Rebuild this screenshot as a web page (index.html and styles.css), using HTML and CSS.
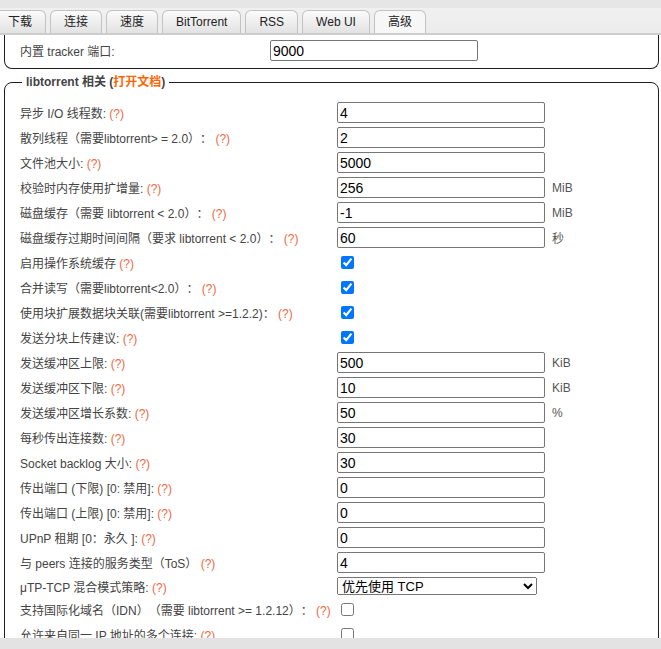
FILE: index.html
```html
<!DOCTYPE html>
<html lang="zh-CN">
<head>
    <meta charset="UTF-8">
    <title>选项 - 高级</title>
    <link rel="stylesheet" href="styles.css">
</head>
<body>
    <div class="tabbar">
        <ul class="tabs">
            <li>下载</li>
            <li>连接</li>
            <li>速度</li>
            <li>BitTorrent</li>
            <li>RSS</li>
            <li>Web UI</li>
            <li class="active">高级</li>
        </ul>
    </div>

    <div class="content">
        <!-- previous section, scrolled mostly out of view -->
        <div class="section cut">
            <table class="opts tracker">
                <colgroup><col class="c-lbl"><col class="c-val"><col></colgroup>
                <tr>
                    <td>内置 tracker 端口:</td>
                    <td><input type="text" value="9000"></td>
                    <td></td>
                </tr>
            </table>
        </div>

        <fieldset class="section">
            <legend>libtorrent 相关 (<a href="#">打开文档</a>)</legend>
            <table class="opts">
                <colgroup><col class="c-lbl"><col class="c-val"><col></colgroup>
                <tr>
                    <td>异步 I/O 线程数: <a class="help" href="#">(?)</a></td>
                    <td><input type="text" value="4"></td>
                    <td class="unit"></td>
                </tr>
                <tr>
                    <td>散列线程（需要libtorrent&gt; = 2.0）： <a class="help" href="#">(?)</a></td>
                    <td><input type="text" value="2"></td>
                    <td class="unit"></td>
                </tr>
                <tr>
                    <td>文件池大小: <a class="help" href="#">(?)</a></td>
                    <td><input type="text" value="5000"></td>
                    <td class="unit"></td>
                </tr>
                <tr>
                    <td>校验时内存使用扩增量: <a class="help" href="#">(?)</a></td>
                    <td><input type="text" value="256"></td>
                    <td class="unit">MiB</td>
                </tr>
                <tr>
                    <td>磁盘缓存（需要 libtorrent &lt; 2.0）： <a class="help" href="#">(?)</a></td>
                    <td><input type="text" value="-1"></td>
                    <td class="unit">MiB</td>
                </tr>
                <tr>
                    <td>磁盘缓存过期时间间隔（要求 libtorrent &lt; 2.0）： <a class="help" href="#">(?)</a></td>
                    <td><input type="text" value="60"></td>
                    <td class="unit">秒</td>
                </tr>
                <tr>
                    <td>启用操作系统缓存 <a class="help" href="#">(?)</a></td>
                    <td><input type="checkbox" checked></td>
                    <td class="unit"></td>
                </tr>
                <tr>
                    <td>合并读写（需要libtorrent&lt;2.0）： <a class="help" href="#">(?)</a></td>
                    <td><input type="checkbox" checked></td>
                    <td class="unit"></td>
                </tr>
                <tr>
                    <td>使用块扩展数据块关联(需要libtorrent &gt;=1.2.2)： <a class="help" href="#">(?)</a></td>
                    <td><input type="checkbox" checked></td>
                    <td class="unit"></td>
                </tr>
                <tr>
                    <td>发送分块上传建议: <a class="help" href="#">(?)</a></td>
                    <td><input type="checkbox" checked></td>
                    <td class="unit"></td>
                </tr>
                <tr>
                    <td>发送缓冲区上限: <a class="help" href="#">(?)</a></td>
                    <td><input type="text" value="500"></td>
                    <td class="unit">KiB</td>
                </tr>
                <tr>
                    <td>发送缓冲区下限: <a class="help" href="#">(?)</a></td>
                    <td><input type="text" value="10"></td>
                    <td class="unit">KiB</td>
                </tr>
                <tr>
                    <td>发送缓冲区增长系数: <a class="help" href="#">(?)</a></td>
                    <td><input type="text" value="50"></td>
                    <td class="unit">%</td>
                </tr>
                <tr>
                    <td>每秒传出连接数: <a class="help" href="#">(?)</a></td>
                    <td><input type="text" value="30"></td>
                    <td class="unit"></td>
                </tr>
                <tr>
                    <td>Socket backlog 大小: <a class="help" href="#">(?)</a></td>
                    <td><input type="text" value="30"></td>
                    <td class="unit"></td>
                </tr>
                <tr>
                    <td>传出端口 (下限) [0: 禁用]: <a class="help" href="#">(?)</a></td>
                    <td><input type="text" value="0"></td>
                    <td class="unit"></td>
                </tr>
                <tr>
                    <td>传出端口 (上限) [0: 禁用]: <a class="help" href="#">(?)</a></td>
                    <td><input type="text" value="0"></td>
                    <td class="unit"></td>
                </tr>
                <tr>
                    <td>UPnP 租期 [0：永久 ]: <a class="help" href="#">(?)</a></td>
                    <td><input type="text" value="0"></td>
                    <td class="unit"></td>
                </tr>
                <tr>
                    <td>与 peers 连接的服务类型（ToS） <a class="help" href="#">(?)</a></td>
                    <td><input type="text" value="4"></td>
                    <td class="unit"></td>
                </tr>
                <tr class="short">
                    <td>μTP-TCP 混合模式策略: <a class="help" href="#">(?)</a></td>
                    <td>
                        <select>
                            <option selected>优先使用 TCP</option>
                            <option>按比例限速</option>
                        </select>
                    </td>
                    <td class="unit"></td>
                </tr>
                <tr>
                    <td>支持国际化域名（IDN）（需要 libtorrent &gt;= 1.2.12）： <a class="help" href="#">(?)</a></td>
                    <td><input type="checkbox"></td>
                    <td class="unit"></td>
                </tr>
                <tr>
                    <td>允许来自同一 IP 地址的多个连接: <a class="help" href="#">(?)</a></td>
                    <td><input type="checkbox"></td>
                    <td class="unit"></td>
                </tr>
            </table>
        </fieldset>
    </div>

    <div class="footer"></div>
</body>
</html>
```

FILE: styles.css
```css
* {
    box-sizing: border-box;
}

body {
    margin: 0;
    font-family: "Liberation Sans", "Noto Sans CJK SC", sans-serif;
    font-size: 12px;
    color: #444;
    background-color: #fff;
    overflow: hidden;
    text-spacing-trim: space-all; /* keep full-width punctuation full width */
}

/* tab strip */
.tabbar {
    height: 35px;
    padding-top: 10px;
    background: linear-gradient(#e6e6e6 0, #e6e6e6 8px, #f0f0f0 8px, #ececec 100%);
    border-bottom: 2px solid #cdcdcd;
}

.tabs {
    display: flex;
    gap: 4px;
    margin: 0 0 0 -6px;
    padding: 0;
    list-style: none;
}

.tabs li {
    height: 23px;
    padding: 0 13px;
    line-height: 22px;
    color: #222;
    border: 1px solid #c2c2c2;
    border-bottom: none;
    border-radius: 6px 6px 0 0;
    background: linear-gradient(#fbfbfb, #e2e2e2);
}

.tabs li.active {
    background: #f7f7f7;
}

/* scrolled options area */
.content {
    height: 603px;
    overflow: hidden;
    padding: 0 2px 0 4px;
}

.section {
    margin: 0;
    padding: 0 0 0 15px;
    border: 1px solid #1e1e1e;
    border-radius: 8px;
    min-width: 0;
}

.section.cut {
    border-top: none;
    border-radius: 0 0 8px 8px;
    padding: 3px 0 5px 15px;
}

fieldset.section {
    margin-top: 5px;
    padding: 10px 0 0 15px;
}

legend {
    margin-left: 2px;
    padding: 0 4px;
    line-height: 16px;
    font-weight: bold;
    color: #444;
}

legend a {
    color: #f60;
    text-decoration: none;
}

.opts {
    width: 620px;
    table-layout: fixed;
    border-collapse: collapse;
}

.opts .c-lbl {
    width: 317px;
}

.tracker .c-lbl {
    width: 250px;
}

.opts .c-val {
    width: 208px;
}

.opts tr {
    height: 25px;
}

.opts tr.short {
    height: 22px;
}

.opts td {
    padding: 0;
    white-space: nowrap;
    vertical-align: middle;
}

.opts td.unit {
    padding-left: 7px;
    color: #555;
}

.help {
    color: #ee6a3f;
    text-decoration: none;
}

input[type="text"] {
    display: block;
    width: 208px;
    height: 21px;
    padding: 0 2px;
    border: 1px solid #767676;
    border-radius: 2px;
    font-family: "Liberation Sans", "Noto Sans CJK SC", sans-serif;
    font-size: 14px;
    color: #000;
}

input[type="checkbox"] {
    display: block;
}

select {
    display: block;
    width: 200px;
    height: 18px;
    font-family: "Liberation Sans", "Noto Sans CJK SC", sans-serif;
    font-size: 13px;
    color: #000;
}

.footer {
    height: 11px;
    background-color: #e3e3e3;
}
```
